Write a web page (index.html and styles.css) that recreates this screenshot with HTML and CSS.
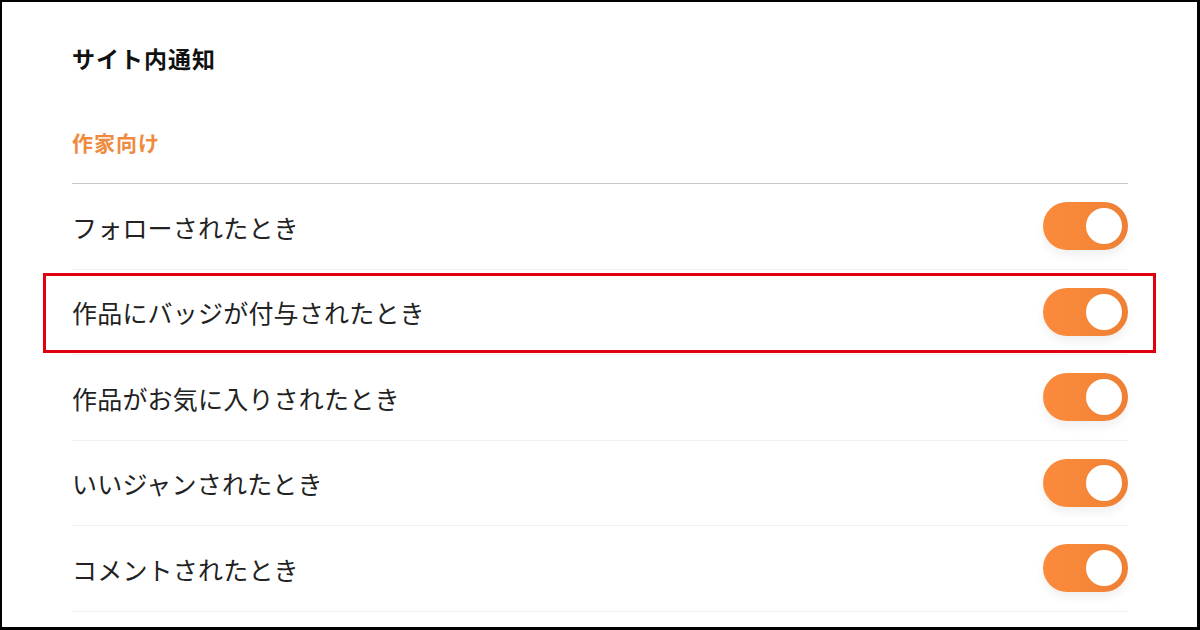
FILE: index.html
```html
<!DOCTYPE html>
<html lang="ja">
<head>
<meta charset="utf-8">
<link rel="stylesheet" href="styles.css">
</head>
<body>
<div class="frame">
  <div class="panel">
    <h1 class="title">サイト内通知</h1>
    <h2 class="section-label">作家向け</h2>
    <ul class="list">
      <li class="row"><span class="label">フォローされたとき</span><span class="toggle"><span class="knob"></span></span></li>
      <li class="row"><span class="label">作品にバッジが付与されたとき</span><span class="toggle"><span class="knob"></span></span></li>
      <li class="row"><span class="label">作品がお気に入りされたとき</span><span class="toggle"><span class="knob"></span></span></li>
      <li class="row"><span class="label">いいジャンされたとき</span><span class="toggle"><span class="knob"></span></span></li>
      <li class="row"><span class="label">コメントされたとき</span><span class="toggle"><span class="knob"></span></span></li>
    </ul>
  </div>
  <div class="highlight"></div>
</div>
</body>
</html>
```

FILE: styles.css
```css
* { box-sizing: border-box; }
html, body { margin: 0; padding: 0; background: #fff; }
body {
  font-family: "Noto Sans CJK JP", "Noto Sans", sans-serif;
  color: #222;
}
.frame {
  position: relative;
  width: 1200px;
  height: 630px;
  border-style: solid;
  border-color: #000;
  border-width: 2px 3px 3px 2px;
  overflow: hidden;
  background: #fff;
}
.panel {
  padding: 0 69px 0 70px;
}
.title {
  margin: 0;
  height: 116px;
  line-height: 112px;
  font-size: 23px;
  font-weight: 700;
  color: #111;
  letter-spacing: 1px;
}
.section-label {
  margin: 0;
  line-height: 48px;
  padding-bottom: 17px;
  font-size: 21px;
  font-weight: 700;
  color: #f08a3e;
  border-bottom: 1px solid #c8c8c8;
  letter-spacing: 1px;
}
.list {
  list-style: none;
  margin: 0;
  padding: 0;
}
.row {
  display: flex;
  align-items: center;
  justify-content: space-between;
  height: 85.5px;
  border-bottom: 1px solid #f1f1f1;
  padding-top: 2px;
}
.label {
  font-size: 25px;
  color: #222;
  line-height: 1;
  letter-spacing: 0.2px;
}
.toggle {
  position: relative;
  width: 85px;
  height: 48px;
  border-radius: 24px;
  background: linear-gradient(90deg, #fb8a3c 0%, #f58638 60%, #ed8035 100%);
  box-shadow: 0 6px 10px rgba(0, 0, 0, 0.06);
  margin-top: -2px;
}
.knob {
  position: absolute;
  top: 6px;
  right: 6px;
  width: 36px;
  height: 36px;
  border-radius: 50%;
  background: #fff;
}
.highlight {
  position: absolute;
  left: 41px;
  top: 271px;
  width: 1113px;
  height: 80px;
  border: 3px solid #e0000f;
  pointer-events: none;
}
```
